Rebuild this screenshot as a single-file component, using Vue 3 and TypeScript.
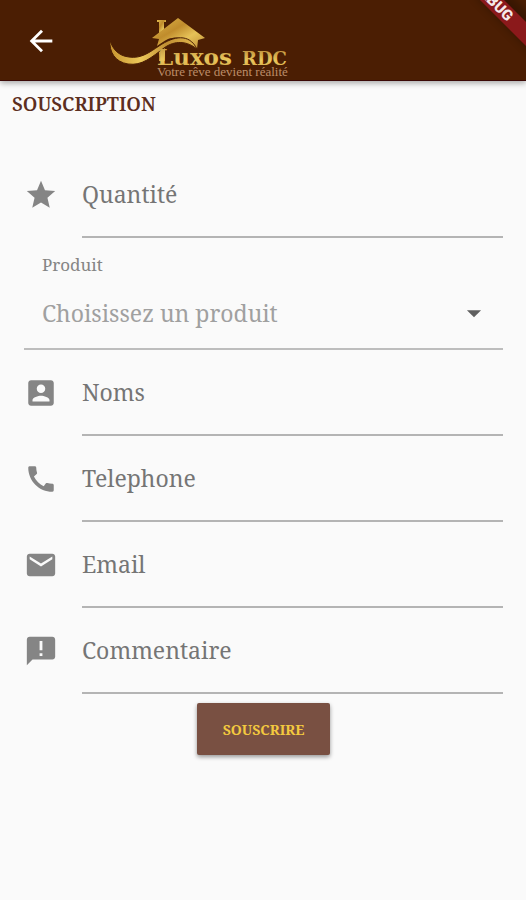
<script setup lang="ts">
import { reactive } from 'vue'

interface Field {
  id: 'noms' | 'telephone' | 'email' | 'commentaire'
  label: string
  type: string
  icon: string
}

const form = reactive({
  quantite: '',
  produit: '',
  noms: '',
  telephone: '',
  email: '',
  commentaire: '',
})

const products: string[] = ['Terrain', 'Maison', 'Appartement']

const starIcon =
  'M12 17.27L18.18 21l-1.64-7.03L22 9.24l-7.19-.61L12 2 9.19 8.63 2 9.24l5.46 4.73L5.82 21z'

const fields: Field[] = [
  {
    id: 'noms',
    label: 'Noms',
    type: 'text',
    icon: 'M3 5v14c0 1.1.89 2 2 2h14c1.1 0 2-.9 2-2V5c0-1.1-.9-2-2-2H5c-1.11 0-2 .9-2 2zm12 4c0 1.66-1.34 3-3 3s-3-1.34-3-3 1.34-3 3-3 3 1.34 3 3zm-9 8c0-2 4-3.1 6-3.1s6 1.1 6 3.1v1H6v-1z',
  },
  {
    id: 'telephone',
    label: 'Telephone',
    type: 'tel',
    icon: 'M20.01 15.38c-1.23 0-2.42-.2-3.53-.56-.35-.12-.74-.03-1.01.24l-1.57 1.97c-2.83-1.35-5.48-3.9-6.89-6.83l1.95-1.66c.27-.28.35-.67.24-1.02-.37-1.11-.56-2.3-.56-3.53 0-.54-.45-.99-.99-.99H4.19C3.65 3 3 3.24 3 3.99 3 13.28 10.73 21 20.01 21c.71 0 .99-.63.99-1.18v-3.45c0-.54-.45-.99-.99-.99z',
  },
  {
    id: 'email',
    label: 'Email',
    type: 'email',
    icon: 'M20 4H4c-1.1 0-1.99.9-1.99 2L2 18c0 1.1.9 2 2 2h16c1.1 0 2-.9 2-2V6c0-1.1-.9-2-2-2zm0 4l-8 5-8-5V6l8 5 8-5v2z',
  },
  {
    id: 'commentaire',
    label: 'Commentaire',
    type: 'text',
    icon: 'M20 2H4c-1.1 0-1.99.9-1.99 2L2 22l4-4h14c1.1 0 2-.9 2-2V4c0-1.1-.9-2-2-2zm-7 13.500h-2v-2h2v2zm0-4h-2V5h2v6.500z',
  },
]
</script>

<template>
  <div class="screen">
    <header class="bar">
      <button class="back" type="button" aria-label="Retour">
        <svg class="icon" viewBox="0 0 24 24" aria-hidden="true">
          <path d="M20 11H7.83l5.59-5.59L12 4l-8 8 8 8 1.41-1.41L7.83 13H20v-2z" />
        </svg>
      </button>
      <svg class="logo" viewBox="0 0 184 66" role="img" aria-label="Luxos RDC">
        <defs>
          <linearGradient id="gold" x1="0" y1="0" x2="1" y2="1">
            <stop offset="0" stop-color="#e0b84e" />
            <stop offset="0.4" stop-color="#c08c2c" />
            <stop offset="0.65" stop-color="#e6c258" />
            <stop offset="1" stop-color="#bd8a30" />
          </linearGradient>
          <linearGradient id="wave" x1="0" y1="0" x2="1" y2="0">
            <stop offset="0" stop-color="#c6932f" />
            <stop offset="0.35" stop-color="#edc95a" />
            <stop offset="0.65" stop-color="#c18f33" />
            <stop offset="1" stop-color="#e2b94e" />
          </linearGradient>
          <linearGradient id="letters" x1="0" y1="0" x2="0" y2="1">
            <stop offset="0" stop-color="#b98938" />
            <stop offset="0.6" stop-color="#e9c65c" />
            <stop offset="1" stop-color="#d5a645" />
          </linearGradient>
        </defs>
        <path class="gold" d="M48 9h9v2h-2v8l-5 4V11h-2z" />
        <path class="gold" d="M69 7L96 27l-7 2-1 9C80 28 70 24 59 28c-4 2-7 4-11 7l2-7-7-1z" />
        <path class="gold" d="M50 40l6-3v13h-6z" />
        <path
          class="swoosh"
          d="M1 29C3 37 9 45 20 46c12 2 21-5 30-11 15-10 30-13 38 3C78 30 66 29 55 37 43 46 33 55 19 53 6 51 0 41 1 29z"
        />
        <text class="name" x="48" y="54">Luxos</text>
        <text class="name rdc" x="133" y="54">RDC</text>
        <text class="motto" x="48" y="65">Votre rêve devient réalité</text>
      </svg>
      <svg class="ribbon" viewBox="0 0 60 60" aria-hidden="true">
        <path class="ribbon-shadow" d="M8 -5L70 57V20L42 -8z" />
        <path class="ribbon-band" d="M8 -6L70 56V32L32 -6z" />
        <text class="ribbon-text" transform="translate(41 22) rotate(45)" text-anchor="end">DEBUG</text>
      </svg>
    </header>

    <main>
      <h1>SOUSCRIPTION</h1>
      <form @submit.prevent>
        <div class="row">
          <svg class="icon" viewBox="0 0 24 24" aria-hidden="true"><path :d="starIcon" /></svg>
          <input
            id="quantite"
            v-model="form.quantite"
            type="text"
            inputmode="numeric"
            placeholder="Quantité"
            aria-label="Quantité"
          />
        </div>

        <div class="product">
          <label for="produit">Produit</label>
          <div class="choice">
            <select id="produit" v-model="form.produit">
              <option value="" disabled>Choisissez un produit</option>
              <option v-for="p in products" :key="p" :value="p">{{ p }}</option>
            </select>
            <svg class="icon caret" viewBox="0 0 24 24" aria-hidden="true"><path d="M7 10l5 5 5-5z" /></svg>
          </div>
        </div>

        <div v-for="f in fields" :key="f.id" class="row">
          <svg class="icon" viewBox="0 0 24 24" aria-hidden="true"><path :d="f.icon" /></svg>
          <input
            :id="f.id"
            v-model="form[f.id]"
            :type="f.type"
            :placeholder="f.label"
            :aria-label="f.label"
          />
        </div>

        <button class="submit" type="submit">SOUSCRIRE</button>
      </form>
    </main>
  </div>
</template>

<style>
body {
  margin: 0;
  background: #fafafa;
}
</style>

<style scoped>
.screen {
  min-height: 100vh;
  background: #fafafa;
  font-family: 'Noto Serif', 'DejaVu Serif Condensed', 'DejaVu Serif', serif;
  color: #757575;
}

.bar {
  position: relative;
  display: flex;
  align-items: flex-start;
  box-sizing: border-box;
  height: 81px;
  padding-left: 24px;
  background: #4b1e03;
  border-bottom: 1px solid #3b0906;
  box-shadow: 0 2px 6px rgba(0, 0, 0, 0.35);
}

.icon {
  flex: none;
  display: block;
  width: 34px;
  height: 34px;
  fill: #858585;
}

.back {
  margin: 24px 0 0;
  padding: 0;
  border: 0;
  background: none;
  cursor: pointer;
}

.back .icon {
  fill: #fff;
}

.logo {
  width: 184px;
  height: 66px;
  margin: 11px 0 0 51px;
  overflow: visible;
}

.gold {
  fill: url(#gold);
}

.swoosh {
  fill: url(#wave);
  stroke: #4b1e03;
  stroke-width: 1;
}

.name {
  font-family: 'DejaVu Serif', serif;
  font-size: 23px;
  font-weight: 700;
  fill: url(#letters);
}

.rdc {
  font-size: 18px;
}

.motto {
  font-family: 'Liberation Serif', serif;
  font-size: 13px;
  fill: #bd8d68;
}

.ribbon {
  position: absolute;
  top: 0;
  right: 0;
  width: 60px;
  height: 60px;
  overflow: hidden;
}

.ribbon-shadow {
  fill: #000;
  opacity: 0.25;
  filter: blur(4px);
}

.ribbon-band {
  fill: #8b191b;
}

.ribbon-text {
  font-family: Roboto, sans-serif;
  font-size: 15px;
  font-weight: 900;
  fill: #f5e9e9;
}

h1 {
  margin: 0;
  padding: 11px 12px 0;
  font-size: 19px;
  line-height: 24px;
  font-weight: 600;
  color: #5c2e20;
}

form {
  display: flex;
  flex-direction: column;
  padding: 36px 23px 24px 24px;
}

.row {
  display: flex;
  align-items: center;
  gap: 24px;
  height: 86px;
}

.row input {
  flex: 1;
  min-width: 0;
  height: 86px;
  box-sizing: border-box;
  padding: 0;
  border: 0;
  border-bottom: 2px solid #b4b4b4;
  border-radius: 0;
  outline: 0;
  background: none;
  font: inherit;
  font-size: 23px;
  color: #333;
}

.row input::placeholder {
  color: #757575;
  opacity: 1;
}

.product {
  padding: 15px 12px 0 18px;
  border-bottom: 2px solid #bdbdbd;
}

.product label {
  display: block;
  font-size: 17px;
  line-height: 24px;
  color: #858585;
}

.choice {
  display: grid;
  align-items: center;
}

.choice > * {
  grid-area: 1 / 1;
}

.choice select {
  width: 100%;
  height: 71px;
  padding: 0;
  border: 0;
  outline: 0;
  appearance: none;
  background: none;
  font: inherit;
  font-size: 23px;
  color: #a0a0a0;
}

.caret {
  justify-self: end;
  fill: #5f5f5f;
  pointer-events: none;
}

.submit {
  align-self: center;
  min-width: 133px;
  height: 52px;
  margin-top: 9px;
  padding: 0 20px;
  border: 0;
  border-radius: 2px;
  background: #795042;
  box-shadow: 0 2px 4px rgba(0, 0, 0, 0.4);
  font: inherit;
  font-size: 14px;
  font-weight: 700;
  color: #f3c93f;
  cursor: pointer;
}
</style>
